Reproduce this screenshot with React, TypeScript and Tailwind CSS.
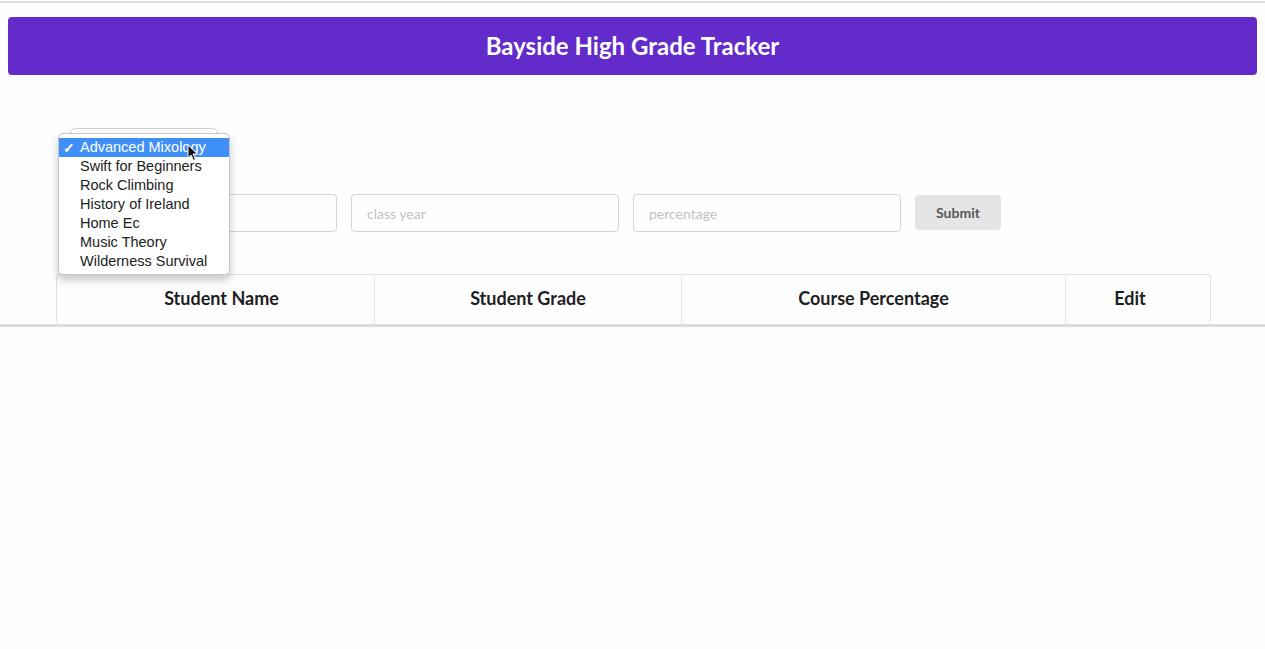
import React from 'react'

const courses = [
  'Advanced Mixology',
  'Swift for Beginners',
  'Rock Climbing',
  'History of Ireland',
  'Home Ec',
  'Music Theory',
  'Wilderness Survival',
]

const headers = [
  { label: 'Student Name', w: 'w-[318px] pl-3' },
  { label: 'Student Grade', w: 'w-[307px]' },
  { label: 'Course Percentage', w: 'w-[384px]' },
  { label: 'Edit', w: 'flex-1 pr-4' },
]

function Cursor() {
  return (
    <svg className="absolute left-[128px] top-[10px]" width="12" height="18" viewBox="0 0 12 18">
      <path d="M1 1 L1 14 L4 11 L6.5 16.5 L8.5 15.5 L6 10 L10.5 10 Z" fill="#111" stroke="#fff" strokeWidth="1" />
    </svg>
  )
}

export default function App() {
  return (
    <div className="min-h-[649px] bg-[#fefefe]" style={{ fontFamily: 'Lato, "Open Sans", sans-serif' }}>
      <div className="mt-px border-t-2 border-b-[3px] border-[#dcdcdc] px-2 pt-[14px]">
        {/* ── header bar ── */}
        <div className="h-[58px] rounded-[4px] bg-[#632bc9] flex items-center justify-center">
          <h1 className="text-white text-[24px] font-bold">Bayside High Grade Tracker</h1>
        </div>

        {/* ── course select with open popup ── */}
        <div className="relative mt-[53px] ml-[62px] w-[148px] h-[22px] rounded-[5px] border border-[#cfcfcf] bg-white">
          <div
            className="absolute left-[-13px] top-[4px] w-[172px] rounded-[5px] border border-[#c8c8c8] bg-white pt-[4px] pb-[3px] z-10 shadow-[0_5px_8px_rgba(0,0,0,0.22)]"
            style={{ fontFamily: '"Liberation Sans", Arial, sans-serif' }}
          >
            {courses.map((c, i) => (
              <div
                key={c}
                className={
                  'h-[19px] flex items-center text-[14.5px] leading-none ' +
                  (i === 0 ? 'bg-[#3f8ff6] text-white' : 'text-[#222]')
                }
              >
                <span className="w-[21px] pl-[4px] text-[14px] font-bold">{i === 0 ? '✓' : ''}</span>
                <span>{c}</span>
              </div>
            ))}
            <Cursor />
          </div>
        </div>

        {/* ── input row ── */}
        <div className="mt-[44px] ml-[61px] flex items-center gap-[14px]">
          <input className="w-[268px] h-[38px] rounded-[4px] border border-[#d6d6d6] px-[15px] text-[14px] outline-none" />
          <input placeholder="class year" className="w-[268px] h-[38px] rounded-[4px] border border-[#d6d6d6] px-[15px] text-[14px] placeholder:text-[#c2c2c2] outline-none" />
          <input placeholder="percentage" className="w-[268px] h-[38px] rounded-[4px] border border-[#d6d6d6] px-[15px] text-[14px] placeholder:text-[#c2c2c2] outline-none" />
          <button className="w-[86px] h-[35px] -mt-[2px] rounded-[4px] bg-[#e4e5e5] text-[#585858] text-[14px] font-bold">Submit</button>
        </div>

        {/* ── table header ── */}
        <div className="mt-[42px] ml-[48px] w-[1155px] h-[50px] flex rounded-[4px] border border-[#e0e0e0] border-b-0">
          {headers.map((h, i) => (
            <div
              key={h.label}
              className={
                h.w + ' flex items-center justify-center pb-[2px] text-[18px] font-bold text-[#1e1e1e] ' +
                (i < headers.length - 1 ? 'border-r border-[#e3e3e3]' : '')
              }
            >
              {h.label}
            </div>
          ))}
        </div>
      </div>
    </div>
  )
}
